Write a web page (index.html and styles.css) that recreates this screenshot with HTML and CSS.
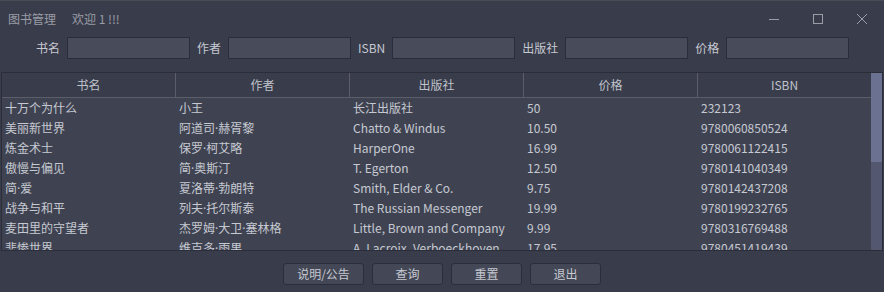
FILE: index.html
```html
<!DOCTYPE html>
<html lang="zh">
<head>
<meta charset="utf-8">
<title>图书管理</title>
<link rel="stylesheet" href="styles.css">
</head>
<body>
<div class="window">
  <div class="titlebar">
    <span class="title">图书管理</span>
    <span class="welcome">欢迎 1 !!!</span>
    <div class="controls">
      <svg class="ctl" width="12" height="12" viewBox="0 0 12 12"><path d="M1 6.5H11" stroke="#9a9ca6" stroke-width="1"/></svg>
      <svg class="ctl" width="12" height="12" viewBox="0 0 12 12"><rect x="1.5" y="1.5" width="9" height="9" fill="none" stroke="#9a9ca6" stroke-width="1"/></svg>
      <svg class="ctl" width="12" height="12" viewBox="0 0 12 12"><path d="M1 1L11 11M11 1L1 11" stroke="#9a9ca6" stroke-width="1"/></svg>
    </div>
  </div>
  <div class="search">
    <label>书名</label><input class="field" type="text">
    <label>作者</label><input class="field" type="text">
    <label>ISBN</label><input class="field" type="text">
    <label>出版社</label><input class="field" type="text">
    <label>价格</label><input class="field" type="text">
  </div>
  <div class="table">
    <div class="grid">
      <div class="head">
        <div class="th">书名</div><div class="th">作者</div><div class="th">出版社</div><div class="th">价格</div><div class="th">ISBN</div>
      </div>
      <div class="body">
        <div class="tr"><div class="td">十万个为什么</div><div class="td">小王</div><div class="td">长江出版社</div><div class="td">50</div><div class="td">232123</div></div>
        <div class="tr"><div class="td">美丽新世界</div><div class="td">阿道司<span class="dot">·</span>赫胥黎</div><div class="td">Chatto &amp; Windus</div><div class="td">10.50</div><div class="td">9780060850524</div></div>
        <div class="tr"><div class="td">炼金术士</div><div class="td">保罗<span class="dot">·</span>柯艾略</div><div class="td">HarperOne</div><div class="td">16.99</div><div class="td">9780061122415</div></div>
        <div class="tr"><div class="td">傲慢与偏见</div><div class="td">简<span class="dot">·</span>奥斯汀</div><div class="td">T. Egerton</div><div class="td">12.50</div><div class="td">9780141040349</div></div>
        <div class="tr"><div class="td">简<span class="dot">·</span>爱</div><div class="td">夏洛蒂<span class="dot">·</span>勃朗特</div><div class="td">Smith, Elder &amp; Co.</div><div class="td">9.75</div><div class="td">9780142437208</div></div>
        <div class="tr"><div class="td">战争与和平</div><div class="td">列夫<span class="dot">·</span>托尔斯泰</div><div class="td">The Russian Messenger</div><div class="td">19.99</div><div class="td">9780199232765</div></div>
        <div class="tr"><div class="td">麦田里的守望者</div><div class="td">杰罗姆<span class="dot">·</span>大卫<span class="dot">·</span>塞林格</div><div class="td">Little, Brown and Company</div><div class="td">9.99</div><div class="td">9780316769488</div></div>
        <div class="tr"><div class="td">悲惨世界</div><div class="td">维克多<span class="dot">·</span>雨果</div><div class="td">A. Lacroix, Verboeckhoven</div><div class="td">17.95</div><div class="td">9780451419439</div></div>
      </div>
    </div>
    <div class="scrollbar"><div class="thumb"></div></div>
  </div>
  <div class="buttons">
    <button class="btn btn-wide">说明/公告</button>
    <button class="btn">查询</button>
    <button class="btn">重置</button>
    <button class="btn">退出</button>
  </div>
</div>
</body>
</html>
```
FILE: styles.css
```css
* { box-sizing: border-box; }
html, body { margin: 0; padding: 0; }
body {
  width: 884px;
  height: 292px;
  overflow: hidden;
  background: #393c4b;
  font-family: "Noto Sans CJK SC", "Noto Sans", sans-serif;
  font-size: 12px;
  color: #c6c9d1;
}
.dot { font-family: "Noto Sans", sans-serif; }
.window {
  height: 292px;
  border-top: 1px solid #4a4c55;
  display: flex;
  flex-direction: column;
}
.titlebar {
  height: 36px;
  display: flex;
  align-items: center;
  padding-left: 8px;
  color: #9a9ca6;
  padding-bottom: 2px;
}
.welcome { margin-left: 16px; }
.controls {
  margin-left: auto;
  display: flex;
  align-items: center;
  gap: 32px;
  padding-right: 16px;
  padding-top: 2px;
}
.ctl { display: block; }
.search {
  height: 22px;
  display: flex;
  align-items: center;
  gap: 7px;
  padding-left: 36px;
  color: #c6c9d1;
}
.search label { line-height: 22px; }
.field {
  width: 123px;
  height: 22px;
  margin: 0;
  background: #474b5a;
  border: 1px solid #2b2e3a;
  border-radius: 0;
  outline: none;
  padding: 0 4px;
}
.table {
  margin: 13px 1px 0;
  height: 179px;
  border: 1px solid #2b2e39;
  display: flex;
  background: #3f4351;
}
.grid { width: 870px; overflow: hidden; }
.head {
  display: grid;
  grid-template-columns: repeat(5, 174px);
  height: 25px;
  background: #393c4b;
  border-bottom: 1px solid #5b5e68;
}
.th {
  text-align: center;
  line-height: 24px;
  color: #bfc2ca;
  border-right: 1px solid #5b5e68;
}
.tr {
  display: grid;
  grid-template-columns: repeat(5, 174px);
  height: 20px;
}
.td {
  line-height: 20px;
  padding-left: 3px;
  white-space: nowrap;
  overflow: hidden;
}
.scrollbar {
  width: 11px;
  background: #535870;
}
.thumb {
  height: 89px;
  background: #6b7190;
}
.buttons {
  display: flex;
  justify-content: center;
  gap: 8px;
  margin-top: 12px;
}
.btn {
  width: 71px;
  height: 22px;
  margin: 0;
  padding: 0;
  background: #434756;
  border: 1px solid #2b2e3a;
  border-radius: 3px;
  color: #c6c9d1;
  font-family: inherit;
  font-size: 12px;
  line-height: 20px;
}
.btn-wide { width: 81px; }
```
